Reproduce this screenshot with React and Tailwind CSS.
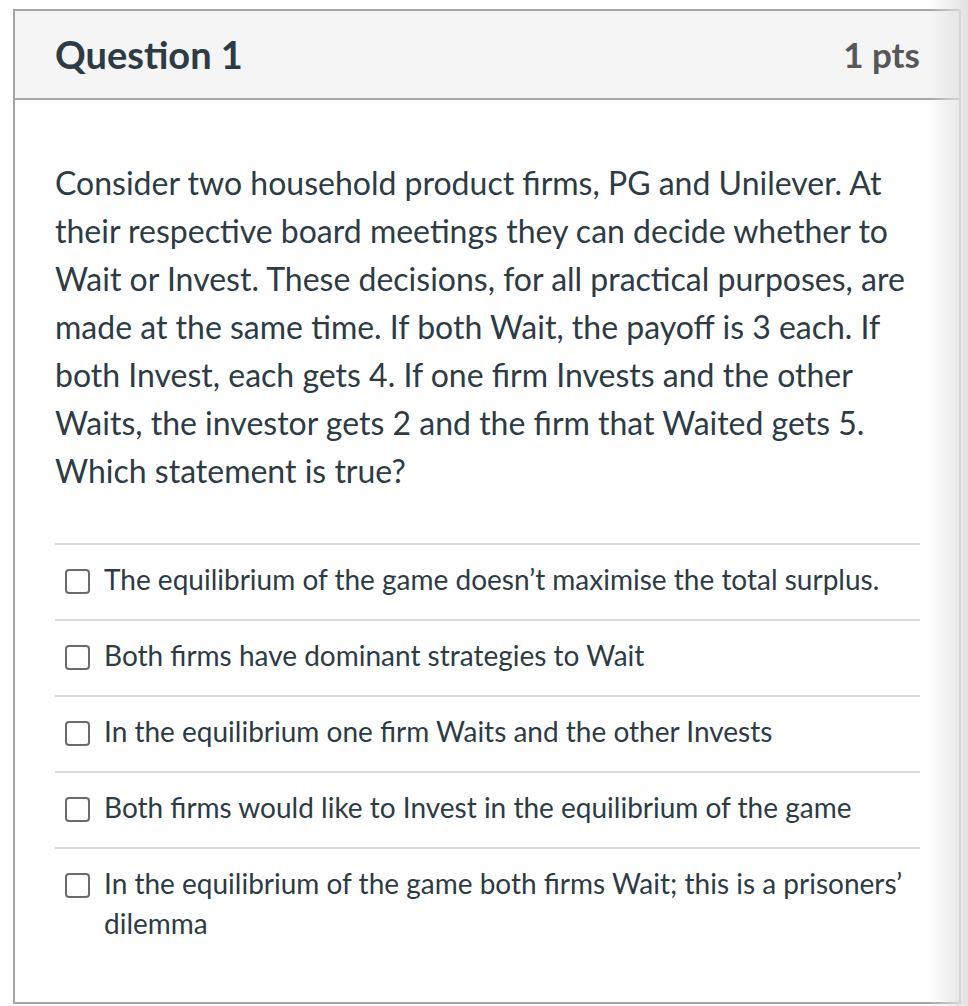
import React from "react";

const answers = [
  "The equilibrium of the game doesn’t maximise the total surplus.",
  "Both firms have dominant strategies to Wait",
  "In the equilibrium one firm Waits and the other Invests",
  "Both firms would like to Invest in the equilibrium of the game",
  "In the equilibrium of the game both firms Wait; this is a prisoners’ dilemma",
];

export default function App() {
  return (
    <div
      className="relative w-[968px] h-[1006px] bg-white overflow-hidden"
      style={{ fontFamily: "Lato, 'Open Sans', sans-serif" }}
    >
      <div className="pt-[9px] pl-[13px] pr-[7px]">
        <div className="border-2 border-[#a5a5a5] h-[995px] flex flex-col">
          <div className="h-[89px] bg-[#f5f5f5] border-b-2 border-[#a5a5a5] flex items-center justify-between pl-[40px] pr-[39px]">
            <h2 className="text-[38px] font-bold text-[#2d3b45]">Question 1</h2>
            <div className="text-[35px] font-bold text-[#575757]">1 pts</div>
          </div>
          <div className="pl-[40px] pr-[39px] pt-[59px]">
            <p className="text-[32px] leading-[48px] text-[#2d3b45] pr-[4px]">
              Consider two household product firms, PG and Unilever. At their respective board meetings they can decide whether to Wait or Invest. These decisions, for all practical purposes, are made at the same time. If both Wait, the payoff is 3 each. If both Invest, each gets 4. If one firm Invests and the other Waits, the investor gets 2 and the firm that Waited gets 5. Which statement is true?
            </p>
            <div className="mt-[48px]">
              {answers.map((a, i) => (
                <div
                  key={i}
                  className="border-t-2 border-[#dcdcdc] flex items-start pt-[14px] pb-[20px] min-h-[76px]"
                >
                  <div className="w-[25px] h-[25px] border-2 border-[#6b6b6b] rounded-[4px] ml-[10px] mt-[10px] shrink-0 bg-white" />
                  <div className="ml-[14px] text-[28px] leading-[40px] text-[#2d3b45] pr-[6px]">
                    {a}
                  </div>
                </div>
              ))}
            </div>
          </div>
        </div>
      </div>
      <div className="absolute top-0 right-0 h-full w-[40px] pointer-events-none bg-gradient-to-r from-transparent to-[#e2e2e2]" />
    </div>
  );
}
